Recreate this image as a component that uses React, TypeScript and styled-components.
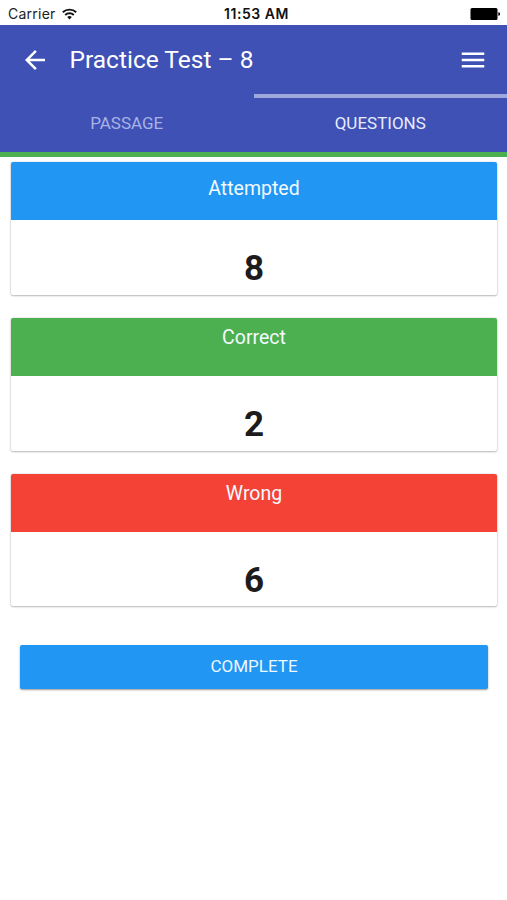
import React from "react";
import styled, { createGlobalStyle } from "styled-components";

const GlobalStyle = createGlobalStyle`
  * { box-sizing: border-box; }
  body { margin: 0; background: #fff; font-family: Roboto, sans-serif; }
`;

const Screen = styled.div`
  display: flex;
  flex-direction: column;
  height: 900px;
  overflow: hidden;
  background: #fff;
`;

const StatusBar = styled.div`
  display: grid;
  grid-template-columns: 1fr auto 1fr;
  align-items: center;
  height: 25px;
  padding: 2px 7px 0 8px;
  font-family: Inter, sans-serif;
  font-size: 14px;
  line-height: 18px;
  color: #222;
`;

const Carrier = styled.div`
  display: flex;
  align-items: center;
  gap: 6px;
  letter-spacing: 0.25px;
`;

const Clock = styled.div`
  padding-left: 5px;
  font-size: 14px;
  font-weight: 600;
  letter-spacing: 0.55px;
  color: #111;
`;

const Battery = styled.svg`
  justify-self: end;
`;

const AppBar = styled.header`
  display: flex;
  align-items: center;
  height: 69px;
  padding: 0 19px 0 20px;
  background: #3f51b5;
  color: #fff;
`;

const IconButton = styled.button`
  display: flex;
  padding: 0;
  border: 0;
  background: none;
  color: inherit;
`;

const Title = styled.h1`
  flex: 1;
  margin: 1px 0 0 19.5px;
  font-size: 24.5px;
  font-weight: 400;
  line-height: 32px;
  white-space: nowrap;
`;

const Tabs = styled.nav`
  display: grid;
  grid-template-columns: 1fr 1fr;
  height: 63px;
  background: #3f51b5;
  border-bottom: 5px solid #4caf50;
`;

const Tab = styled.button<{ $active?: boolean }>`
  padding: 0 0 5px;
  border: 0;
  border-top: 4px solid ${(p) => (p.$active ? "#9fa8da" : "transparent")};
  background: none;
  color: ${(p) => (p.$active ? "#e8ebff" : "#a9b2e6")};
  font: 400 17px/20px Roboto, sans-serif;
`;

const Content = styled.main`
  display: flex;
  flex-direction: column;
  gap: 23px;
  padding: 5.4px 10px 0 11px;
`;

const Card = styled.section`
  height: 132.7px;
  overflow: hidden;
  border-radius: 2px;
  background: #fff;
  box-shadow: 0 1px 2px rgba(0, 0, 0, 0.24), 0 0 2px rgba(0, 0, 0, 0.2);
`;

const CardHeader = styled.h2<{ $color: string; $top: number }>`
  height: 58px;
  margin: 0;
  padding-top: ${(p) => p.$top}px;
  background: ${(p) => p.$color};
  color: #f3faff;
  font-size: 19.5px;
  font-weight: 400;
  line-height: 24px;
  text-align: center;
`;

const Score = styled.div`
  padding-top: 29px;
  color: #1c1c1c;
  font-size: 35px;
  font-weight: 700;
  line-height: 40px;
  text-align: center;
`;

const CompleteButton = styled.button`
  height: 44px;
  margin: 15.5px 9px 0 9px;
  padding: 0 0 1px;
  border: 0;
  border-radius: 2px;
  background: #2196f3;
  box-shadow: 0 1px 2px rgba(0, 0, 0, 0.4);
  color: #eef8ff;
  font: 400 17px/20px Roboto, sans-serif;
`;

const results = [
  { label: "Attempted", value: 8, color: "#2196f3", top: 14.6 },
  { label: "Correct", value: 2, color: "#4caf50", top: 8 },
  { label: "Wrong", value: 6, color: "#f44336", top: 8 },
];

export default function App() {
  return (
    <Screen>
      <GlobalStyle />
      <StatusBar>
        <Carrier>
          Carrier
          <svg width="15" height="12" viewBox="0 0 15 12" fill="none" stroke="#111" strokeWidth="1.9">
            <path d="M.8 4.3a9.6 9.6 0 0 1 13.4 0M3.2 7a6.2 6.2 0 0 1 8.6 0" />
            <path d="M7.5 11.5 5.2 9.1a3.3 3.3 0 0 1 4.6 0Z" fill="#111" stroke="none" />
          </svg>
        </Carrier>
        <Clock>11:53 AM</Clock>
        <Battery width="30" height="12" viewBox="0 0 30 12">
          <rect x="0.5" y="0" width="27" height="12" rx="1.5" fill="#000" />
          <path d="M28.3 4.2a1.8 1.8 0 0 1 0 3.6Z" fill="#000" />
        </Battery>
      </StatusBar>
      <AppBar>
        <IconButton aria-label="Back">
          <svg width="30" height="30" viewBox="0 0 24 24" fill="currentColor">
            <path d="M20 11H7.83l5.59-5.59L12 4l-8 8 8 8 1.41-1.41L7.83 13H20v-2z" />
          </svg>
        </IconButton>
        <Title>Practice Test – 8</Title>
        <IconButton aria-label="Menu">
          <svg width="30" height="30" viewBox="0 0 24 24" fill="currentColor">
            <path d="M3 18h18v-2H3v2zm0-5h18v-2H3v2zm0-7v2h18V6H3z" />
          </svg>
        </IconButton>
      </AppBar>
      <Tabs>
        <Tab>PASSAGE</Tab>
        <Tab $active>QUESTIONS</Tab>
      </Tabs>
      <Content>
        {results.map((r) => (
          <Card key={r.label}>
            <CardHeader $color={r.color} $top={r.top}>{r.label}</CardHeader>
            <Score>{r.value}</Score>
          </Card>
        ))}
        <CompleteButton>COMPLETE</CompleteButton>
      </Content>
    </Screen>
  );
}
